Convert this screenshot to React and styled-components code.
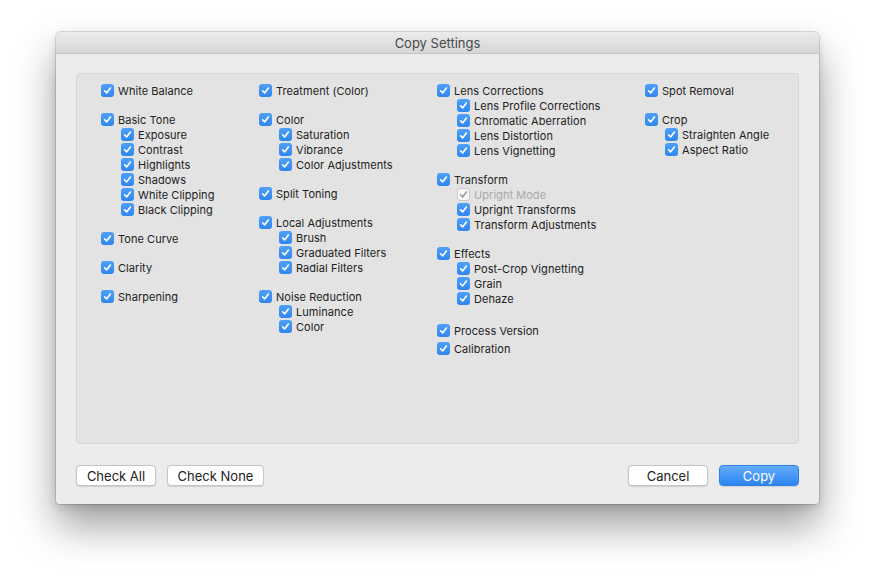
import React from "react";
import styled, { createGlobalStyle } from "styled-components";

const Global = createGlobalStyle`
  html, body { margin: 0; padding: 0; background: #ffffff; }
  body { font-family: Inter, "Liberation Sans", Arial, sans-serif; -webkit-font-smoothing: antialiased; }
`;

const Page = styled.div`
  padding: 32px 0 0 56px;
  height: 585px;
  box-sizing: border-box;
`;

const Window = styled.div`
  width: 763px;
  height: 472px;
  background: #ececec;
  border-radius: 5px 5px 4px 4px;
  box-shadow: 0 0 0 1px rgba(0, 0, 0, 0.12), 0 22px 40px rgba(0, 0, 0, 0.38), 0 4px 10px rgba(0, 0, 0, 0.12);
  display: flex;
  flex-direction: column;
  overflow: hidden;
`;

const TitleBar = styled.div`
  height: 22px;
  flex: none;
  box-sizing: border-box;
  background: linear-gradient(#ebebeb, #d6d6d6);
  border-bottom: 1px solid #c2c2c2;
  display: flex;
  align-items: center;
  justify-content: center;
  font-size: 13px;
  color: #4a4a4a;
`;

const Body = styled.div`
  flex: 1;
  display: flex;
  flex-direction: column;
  padding: 19px 20px 18px 20px;
`;

const Panel = styled.div`
  height: 371px;
  box-sizing: border-box;
  background: #e3e3e3;
  border: 1px solid #d6d6d6;
  border-radius: 4px;
  padding: 9px 0 0 24px;
  display: grid;
  grid-template-columns: 158px 178px 208px 1fr;
  align-items: start;
`;

const Column = styled.div`
  display: flex;
  flex-direction: column;
`;

const Group = styled.div`
  display: flex;
  flex-direction: column;
  margin-top: ${(p) => (p.$gap != null ? p.$gap : 14)}px;
  &:first-child { margin-top: 0; }
`;

const Row = styled.div`
  height: 15px;
  display: flex;
  align-items: center;
  padding-left: ${(p) => (p.$sub ? 20 : 0)}px;
  font-size: 11px;
  letter-spacing: 0.05px;
  color: ${(p) => (p.$disabled ? "#a9a9a9" : "#222222")};
  white-space: nowrap;
`;

const Box = styled.span`
  width: 13px;
  height: 13px;
  flex: none;
  box-sizing: border-box;
  border-radius: 3px;
  margin-right: 4px;
  display: flex;
  align-items: center;
  justify-content: center;
  background: ${(p) => (p.$disabled ? "#f7f7f7" : "linear-gradient(#4fa0f8, #2f86ef)")};
  border: ${(p) => (p.$disabled ? "1px solid #c9c9c9" : "none")};
`;

const Footer = styled.div`
  margin-top: 21px;
  display: flex;
  align-items: center;
  gap: 11px;
`;

const Spacer = styled.div`
  flex: 1;
`;

const Button = styled.button`
  height: 21px;
  width: ${(p) => p.$w}px;
  padding: 0;
  box-sizing: border-box;
  border-radius: 4px;
  font-family: inherit;
  font-size: 13px;
  cursor: default;
  color: ${(p) => (p.$primary ? "#ffffff" : "#222222")};
  background: ${(p) => (p.$primary ? "linear-gradient(#63acf9, #2c84f4)" : "#ffffff")};
  border: 1px solid ${(p) => (p.$primary ? "#2f82e8" : "#c6c6c6")};
  box-shadow: 0 0.5px 1px rgba(0, 0, 0, 0.12);
`;

function Check({ label, sub, disabled }) {
  return (
    <Row $sub={sub} $disabled={disabled}>
      <Box $disabled={disabled}>
        <svg width="11" height="11" viewBox="0 0 11 11">
          <path
            d="M2.6 5.8 L4.6 7.9 L8.4 3"
            fill="none"
            stroke={disabled ? "#9a9a9a" : "#ffffff"}
            strokeWidth="1.6"
            strokeLinecap="round"
            strokeLinejoin="round"
          />
        </svg>
      </Box>
      {label}
    </Row>
  );
}

const columns = [
  [
    { items: ["White Balance"] },
    { items: ["Basic Tone", "Exposure", "Contrast", "Highlights", "Shadows", "White Clipping", "Black Clipping"] },
    { items: ["Tone Curve"] },
    { items: ["Clarity"] },
    { items: ["Sharpening"] },
  ],
  [
    { items: ["Treatment (Color)"] },
    { items: ["Color", "Saturation", "Vibrance", "Color Adjustments"] },
    { items: ["Split Toning"] },
    { items: ["Local Adjustments", "Brush", "Graduated Filters", "Radial Filters"] },
    { items: ["Noise Reduction", "Luminance", "Color"] },
  ],
  [
    { items: ["Lens Corrections", "Lens Profile Corrections", "Chromatic Aberration", "Lens Distortion", "Lens Vignetting"] },
    { items: ["Transform", "Upright Mode", "Upright Transforms", "Transform Adjustments"], disabled: "Upright Mode" },
    { items: ["Effects", "Post-Crop Vignetting", "Grain", "Dehaze"] },
    { items: ["Process Version"], gap: 17 },
    { items: ["Calibration"], gap: 3 },
  ],
  [
    { items: ["Spot Removal"] },
    { items: ["Crop", "Straighten Angle", "Aspect Ratio"] },
  ],
];

export default function App() {
  return (
    <>
      <Global />
      <Page>
        <Window>
          <TitleBar>Copy Settings</TitleBar>
          <Body>
            <Panel>
              {columns.map((col, ci) => (
                <Column key={ci}>
                  {col.map((g, gi) => (
                    <Group key={gi} $gap={g.gap}>
                      {g.items.map((it, ii) => (
                        <Check key={ii} label={it} sub={ii > 0} disabled={g.disabled === it} />
                      ))}
                    </Group>
                  ))}
                </Column>
              ))}
            </Panel>
            <Footer>
              <Button $w={80}>Check All</Button>
              <Button $w={97}>Check None</Button>
              <Spacer />
              <Button $w={80}>Cancel</Button>
              <Button $w={80} $primary>Copy</Button>
            </Footer>
          </Body>
        </Window>
      </Page>
    </>
  );
}
